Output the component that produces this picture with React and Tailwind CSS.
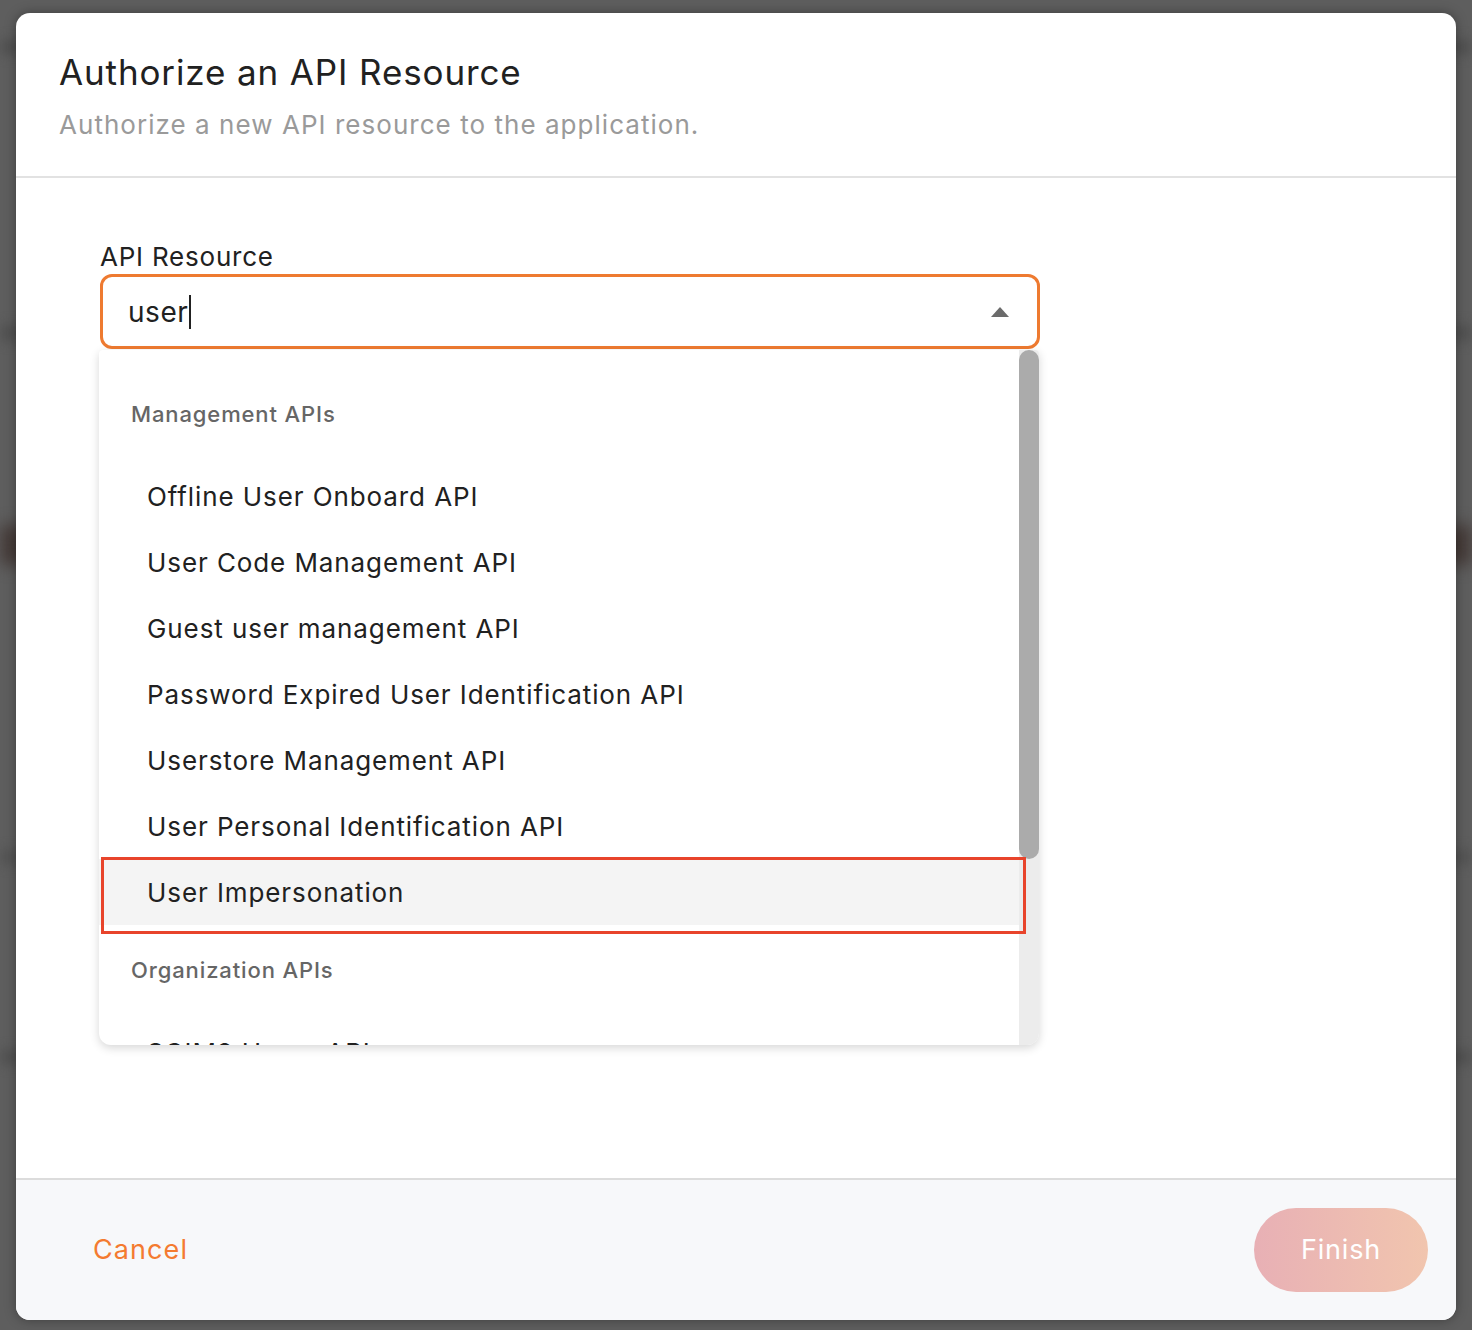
import { useState } from "react";

const FONT = { fontFamily: "Inter, 'Noto Sans', sans-serif" };

const groups = [
  {
    title: "Management APIs",
    items: [
      "Offline User Onboard API",
      "User Code Management API",
      "Guest user management API",
      "Password Expired User Identification API",
      "Userstore Management API",
      "User Personal Identification API",
      "User Impersonation",
    ],
  },
  {
    title: "Organization APIs",
    items: ["SCIM2 Users API", "SCIM2 Groups API"],
  },
];

export default function App() {
  const [query] = useState("user");
  const highlighted = "User Impersonation";

  return (
    <div className="relative min-h-[1330px] w-full overflow-hidden bg-[#5e5e5e]" style={FONT}>
      {/* blurred page behind the modal */}
      <div className="absolute inset-0">
        <div className="absolute left-0 top-[40px] h-[14px] w-full bg-[#4f4f4f] blur-[6px]" />
        <div className="absolute left-0 top-[325px] h-[16px] w-full bg-[#505050] blur-[6px]" />
        <div className="absolute left-0 top-[525px] h-[40px] w-full bg-[#443a37] blur-[8px]" />
        <div className="absolute left-0 top-[850px] h-[14px] w-full bg-[#525252] blur-[6px]" />
        <div className="absolute left-0 top-[1050px] h-[14px] w-full bg-[#505050] blur-[6px]" />
      </div>

      <div className="relative px-[16px] pt-[13px]">
        <div className="flex h-[1307px] flex-col rounded-[14px] bg-white shadow-[0_0_12px_rgba(0,0,0,0.35)]">
          {/* Header */}
          <div className="border-b-2 border-[#e2e2e2] px-[43px] pb-[34px] pt-[36px]">
            <h1 className="text-[35px] leading-[46px] tracking-[0.025em] text-[#212121]">Authorize an API Resource</h1>
            <p className="mt-[13px] text-[26px] leading-[34px] tracking-[0.04em] text-[#9a9a9a]">
              Authorize a new API resource to the application.
            </p>
          </div>

          {/* Body */}
          <div className="flex-1 px-[84px] pt-[62px]">
            <label className="block text-[26px] leading-[34px] tracking-[0.03em] text-[#212121]">API Resource</label>
            <div className="relative w-[940px]">
              <div className="flex h-[75px] items-center rounded-[12px] border-[3px] border-[#ee7a30] pl-[25px] pr-[28px]">
                <span className="text-[28px] tracking-[0.02em] text-[#212121]">{query}</span>
                <span className="ml-[1px] h-[34px] w-[1.5px] bg-[#212121]" />
                <div className="flex-1" />
                <svg width="18" height="10" viewBox="0 0 18 10">
                  <path d="M0 10 L9 0 L18 10 Z" fill="#6b6b6b" />
                </svg>
              </div>

              {/* Dropdown */}
              <div className="absolute left-[-1px] top-[76px] flex h-[695px] w-[940px] overflow-hidden rounded-b-[12px] rounded-t-[4px] bg-white shadow-[0_3px_10px_rgba(0,0,0,0.16)]">
                <div className="flex-1 pt-[34px]">
                  {groups.map((g) => (
                    <div key={g.title}>
                      <div className="flex h-[60px] items-center pl-[32px] text-[22px] font-medium tracking-[0.04em] text-[#666]">
                        {g.title}
                      </div>
                      <div className="pb-[15px] pt-[19px]">
                        {g.items.map((it) => (
                          <div
                            key={it}
                            className={
                              "flex h-[66px] items-center pl-[48px] text-[26px] tracking-[0.035em] text-[#212121] " +
                              (it === highlighted ? "bg-[#f4f4f4]" : "")
                            }
                          >
                            {it}
                          </div>
                        ))}
                      </div>
                    </div>
                  ))}
                </div>
                <div className="w-[20px] bg-[#ececec]">
                  <div className="h-[509px] rounded-[10px] bg-[#ababab]" />
                </div>

                {/* annotation box */}
                <div className="pointer-events-none absolute left-[2px] top-[507px] h-[77px] w-[925px] border-[3px] border-[#e8442b]" />
              </div>
            </div>
          </div>

          {/* Footer */}
          <div className="flex h-[142px] items-center justify-between rounded-b-[14px] border-t-2 border-[#dcdcdc] bg-[#f7f8fa] pl-[77px] pr-[28px]">
            <button className="text-[27px] tracking-[0.04em] text-[#f47b30]">Cancel</button>
            <button className="h-[84px] w-[174px] rounded-full bg-gradient-to-r from-[#e8b0b5] to-[#f1c5ae] text-[27px] tracking-[0.03em] text-white">
              Finish
            </button>
          </div>
        </div>
      </div>
    </div>
  );
}
